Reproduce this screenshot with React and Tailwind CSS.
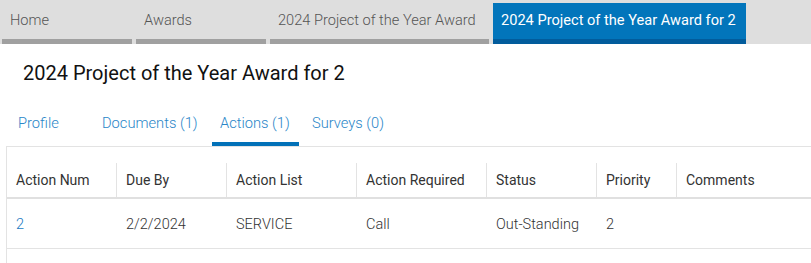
const crumbs = [
  { label: 'Home', w: 'w-[130px]' },
  { label: 'Awards', w: 'w-[130px]' },
  { label: '2024 Project of the Year Award', w: 'w-[219px]' },
]

const subTabs = [
  { label: 'Profile', cls: 'ml-[10px] w-[84px]' },
  { label: 'Documents (1)', cls: 'w-[113px]' },
  { label: 'Actions (1)', cls: 'ml-[5px] w-[87px]', active: true },
  { label: 'Surveys (0)', cls: 'ml-[5px] w-[90px]' },
]

const cols = [
  { label: 'Action Num', w: 'w-[109px]' },
  { label: 'Due By', w: 'w-[110px]' },
  { label: 'Action List', w: 'w-[130px]' },
  { label: 'Action Required', w: 'w-[130px]' },
  { label: 'Status', w: 'w-[110px]' },
  { label: 'Priority', w: 'w-[80px]' },
  { label: 'Comments', w: 'flex-1' },
]

const rows = [['2', '2/2/2024', 'SERVICE', 'Call', 'Out-Standing', '2', '']]

export default function App() {
  return (
    <div className="w-[811px] h-[263px] overflow-hidden bg-white font-['Roboto',sans-serif]">
      {/* Breadcrumb tabs */}
      <div className="flex h-[44px] bg-[#dedede] pl-[2px] gap-[4px]">
        {crumbs.map((c) => (
          <div key={c.label} className={`${c.w} flex flex-col mt-[3px]`}>
            <div className="flex-1 flex items-center px-[8px] text-[14.6px] text-[#555] font-light whitespace-nowrap">{c.label}</div>
            <div className="h-[5px] bg-[#a0a0a0]" />
          </div>
        ))}
        <div className="w-[253px] flex flex-col mt-[3px] bg-[#0275bb]">
          <div className="flex-1 flex items-center px-[8px] text-[14.6px] text-white whitespace-nowrap">2024 Project of the Year Award for 2</div>
          <div className="h-[5px] bg-[#025c9c]" />
        </div>
      </div>

      {/* Title */}
      <h1 className="pl-[23px] pt-[17px] h-[60px] text-[20px] text-[#111] leading-[24px]">
        2024 Project of the Year Award for 2
      </h1>

      {/* Sub tabs */}
      <div className="flex h-[42px]">
        {subTabs.map((t) => (
          <div key={t.label} className={`${t.cls} flex flex-col`}>
            <div className="flex-1 flex items-center px-[8px] text-[14.7px] text-[#2a86c8] font-light whitespace-nowrap">{t.label}</div>
            <div className={`h-[4px] ${t.active ? 'bg-[#0271b8]' : ''}`} />
          </div>
        ))}
      </div>

      {/* Table panel */}
      <div className="ml-[6px] border-l border-t border-[#e3e3e3] h-[200px]">
        <div className="pt-[16px]">
          <div className="flex h-[36px] border-b-2 border-[#e0e0e0]">
            {cols.map((c, i) => (
              <div
                key={c.label}
                className={`${c.w} flex items-center px-[9px] pt-[1px] text-[14px] text-[#333] whitespace-nowrap ${i > 0 ? 'border-l border-[#e3e3e3]' : ''}`}
              >
                {c.label}
              </div>
            ))}
          </div>
          {rows.map((r, ri) => (
            <div key={ri} className="flex h-[50px] border-b border-[#e3e3e3]">
              {r.map((v, i) => (
                <div
                  key={i}
                  className={`${cols[i].w} flex items-center px-[9px] pt-[2px] text-[14.5px] font-light ${i > 0 ? 'border-l border-transparent' : ''} ${i === 0 ? 'text-[#1a79c2]' : 'text-[#333]'}`}
                >
                  {v}
                </div>
              ))}
            </div>
          ))}
        </div>
      </div>
    </div>
  )
}
